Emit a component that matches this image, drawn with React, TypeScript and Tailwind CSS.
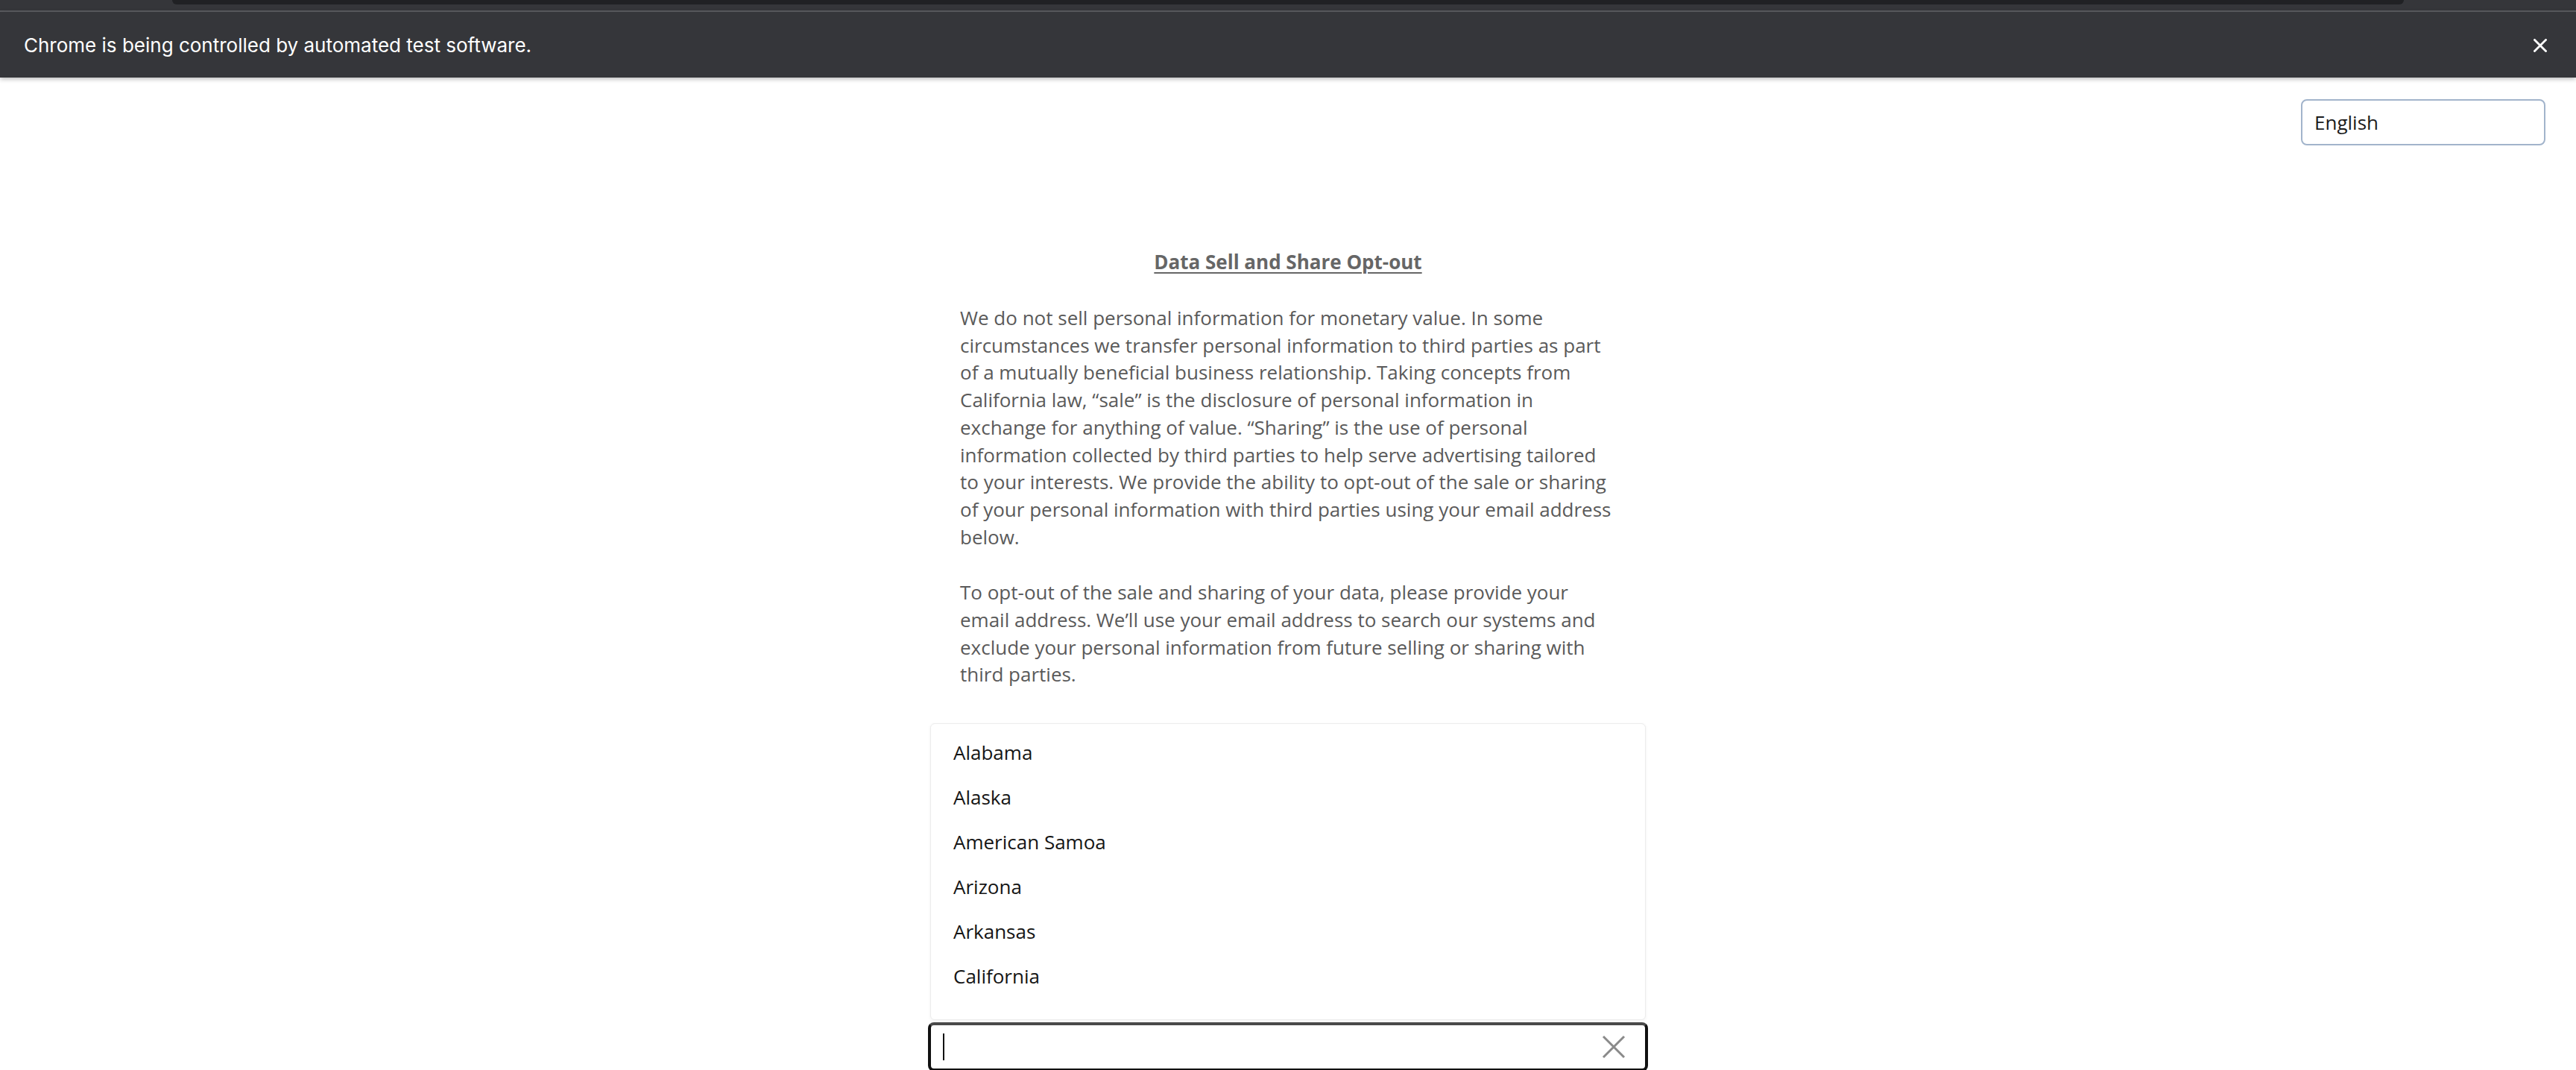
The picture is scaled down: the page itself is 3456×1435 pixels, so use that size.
import React from "react";

const states = ["Alabama", "Alaska", "American Samoa", "Arizona", "Arkansas", "California"];

export default function App() {
  return (
    <div className="h-[1435px] w-full overflow-hidden bg-white font-['Open_Sans',sans-serif]">
      {/* Browser chrome strip */}
      <div className="h-[14px] bg-[#35363a] px-[231px]">
        <div className="h-[6px] rounded-b-[10px] bg-[#202124]" />
      </div>
      <div className="h-[2px] bg-[#5b5c60]" />
      {/* Automation banner */}
      <div className="relative z-10 flex h-[88px] items-center justify-between bg-[#35363a] pl-[32px] pr-[39px] shadow-[0_2px_6px_rgba(0,0,0,0.28)]">
        <span className="font-['Inter',sans-serif] text-[26px] text-white">
          Chrome is being controlled by automated test software.
        </span>
        <svg width="18" height="18" viewBox="0 0 18 18" className="mt-[1px]">
          <path d="M1.5 1.5 16.5 16.5M16.5 1.5 1.5 16.5" stroke="#ffffff" strokeWidth="2.8" strokeLinecap="square" />
        </svg>
      </div>

      {/* Language select */}
      <div className="mt-[29px] flex justify-end pr-[41px]">
        <div className="flex h-[62px] w-[328px] items-center rounded-[8px] border-2 border-[#a2b4cb] pl-[16px] text-[26px] text-[#1c1c1c]">
          English
        </div>
      </div>

      {/* Content */}
      <div className="mx-auto w-[966px]">
        <h1 className="mt-[141px] text-center text-[26px] font-bold leading-[30px] text-[#666666] underline decoration-2 underline-offset-[4px]">
          Data Sell and Share Opt-out
        </h1>
        <div className="mt-[42px] px-[43px] text-[26px] leading-[36.7px] text-[#5a5a5a]">
          <p>
            We do not sell personal information for monetary value. In some circumstances we transfer
            personal information to third parties as part of a mutually beneficial business
            relationship. Taking concepts from California law, “sale” is the disclosure of personal
            information in exchange for anything of value. “Sharing” is the use of personal information
            collected by third parties to help serve advertising tailored to your interests. We provide
            the ability to opt-out of the sale or sharing of your personal information with third
            parties using your email address below.
          </p>
          <p className="mt-[38px]">
            To opt-out of the sale and sharing of your data, please provide your email address. We’ll
            use your email address to search our systems and exclude your personal information from
            future selling or sharing with third parties.
          </p>
        </div>

        {/* Listbox */}
        <div className="mx-[3px] mt-[47px] h-[398px] overflow-hidden rounded-[6px] border border-[#ececec] bg-white pt-[8px] shadow-[0_1px_4px_rgba(0,0,0,0.06)]">
          <ul>
            {states.map((s) => (
              <li key={s} className="flex h-[60px] items-center px-[30px] text-[26px] text-[#151515]">
                {s}
              </li>
            ))}
          </ul>
        </div>

        {/* Input */}
        <div className="mt-[3px] flex h-[66px] items-center justify-between rounded-[8px] border-[4px] border-[#111111] border-t-[#4a4a4a] pl-[16px] pr-[26px]">
          <span className="block h-[36px] w-[2px] bg-[#111111]" />
          <svg width="32" height="32" viewBox="0 0 32 32">
            <path d="M2 2 30 30M30 2 2 30" stroke="#8a8a8a" strokeWidth="3" />
          </svg>
        </div>
      </div>
    </div>
  );
}
